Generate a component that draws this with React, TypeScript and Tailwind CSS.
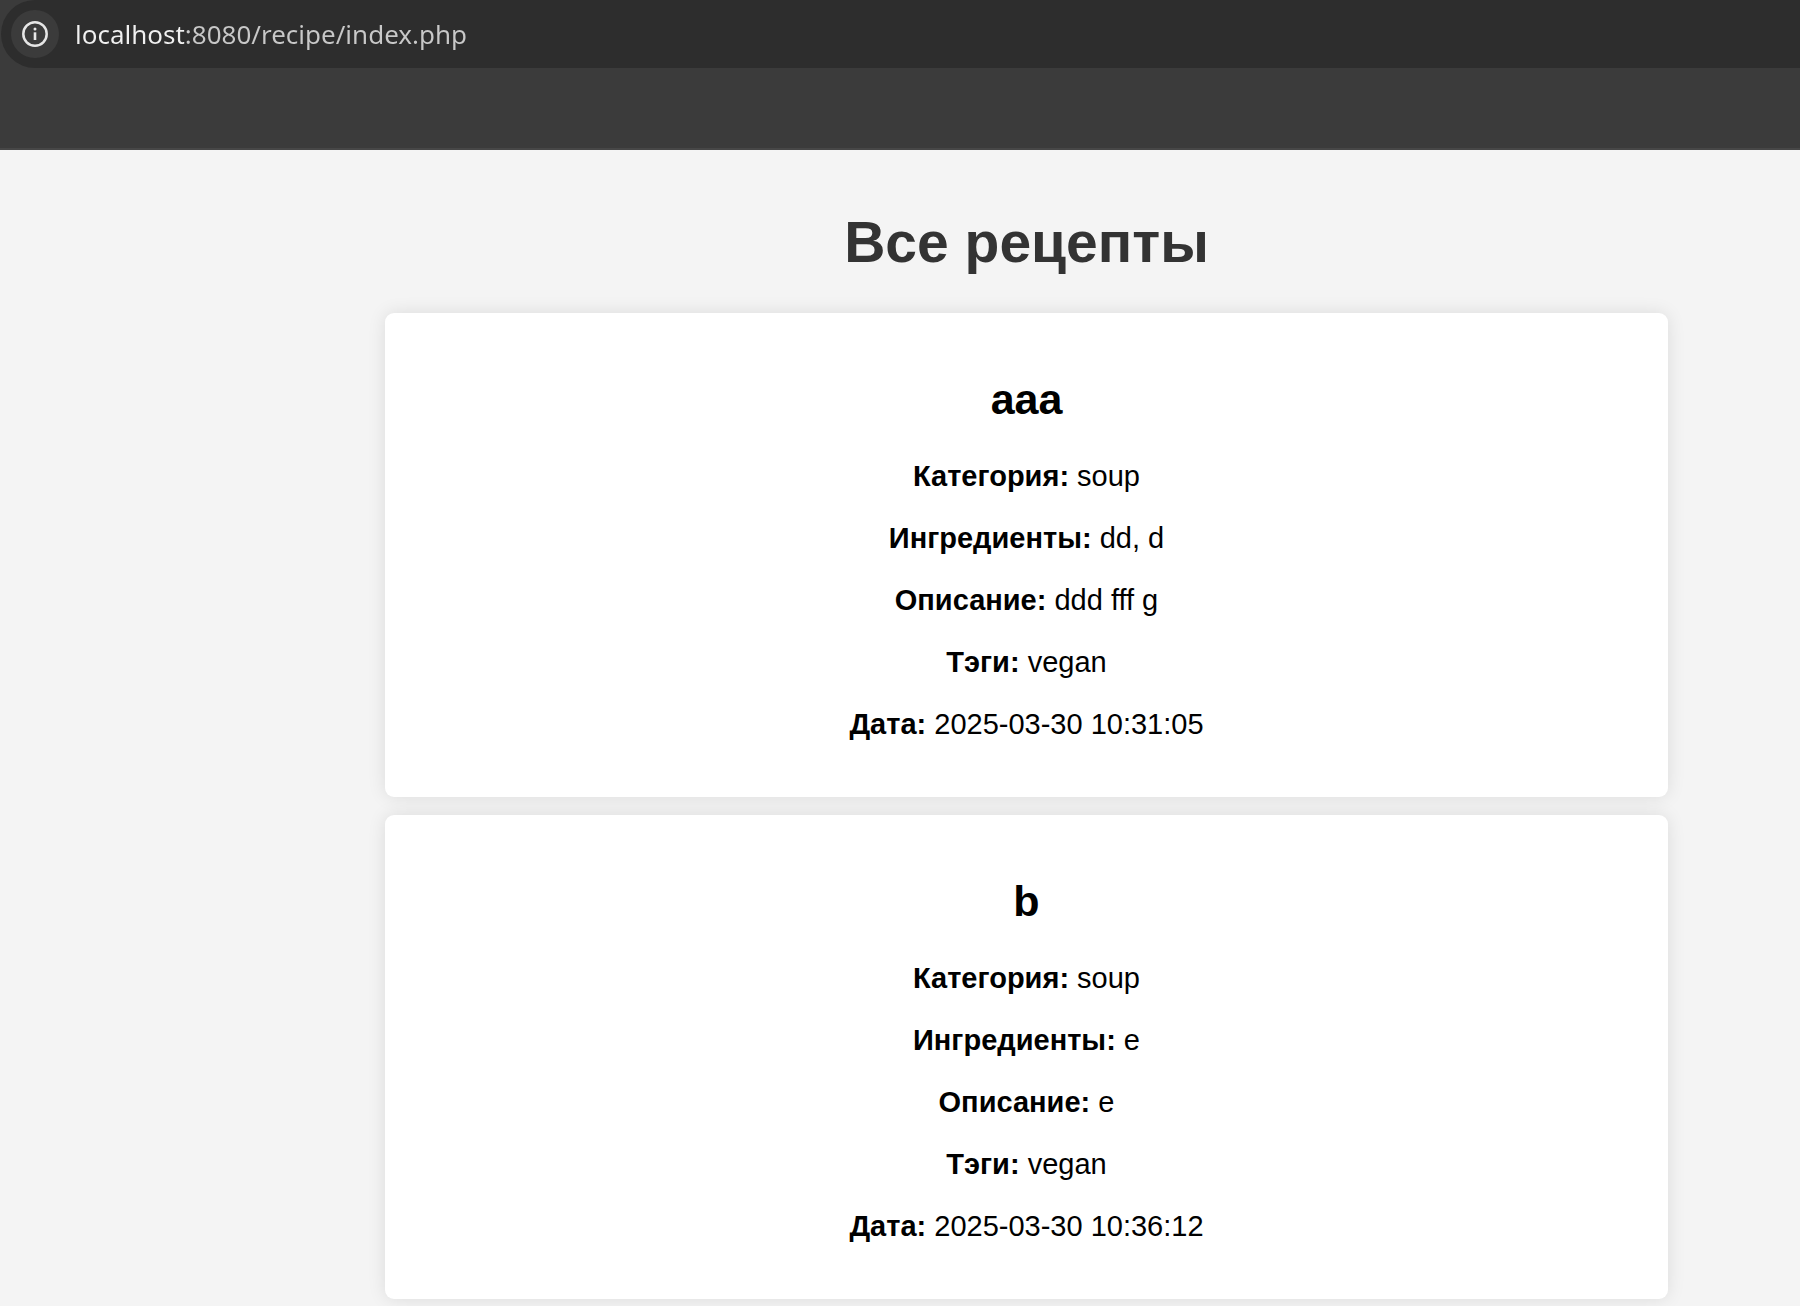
type Recipe = {
  title: string;
  category: string;
  ingredients: string;
  description: string;
  tags: string;
  date: string;
};

const recipes: Recipe[] = [
  {
    title: "aaa",
    category: "soup",
    ingredients: "dd, d",
    description: "ddd fff g",
    tags: "vegan",
    date: "2025-03-30 10:31:05",
  },
  {
    title: "b",
    category: "soup",
    ingredients: "e",
    description: "e",
    tags: "vegan",
    date: "2025-03-30 10:36:12",
  },
];

function AddressBar() {
  return (
    <header className="h-[150px] border-b-2 border-[#474747] bg-[#3b3b3b] pl-px">
      <div className="flex h-[68px] items-center rounded-l-full bg-[#2d2d2d] pl-2.5">
        <button
          type="button"
          aria-label="Site information"
          className="flex size-12 shrink-0 items-center justify-center rounded-full bg-[#3b3b3b] text-[#e6e6e6]"
        >
          <svg viewBox="0 0 26 26" className="size-[26px]" fill="none" aria-hidden="true">
            <circle cx="13" cy="13" r="11.7" stroke="currentColor" strokeWidth="2.5" />
            <circle cx="13" cy="7.9" r="1.5" fill="currentColor" />
            <path d="M13 11.3v7.7" stroke="currentColor" strokeWidth="2.6" />
          </svg>
        </button>
        <input
          type="text"
          aria-label="Address"
          defaultValue="localhost:8080/recipe/index.php"
          className="ml-4 h-10 min-w-0 flex-1 bg-[linear-gradient(90deg,#f0f0f0_109px,#c8c8c8_109px)] bg-clip-text font-['Noto_Sans','Open_Sans',sans-serif] text-[26px] text-transparent outline-none"
        />
      </div>
    </header>
  );
}

function Field({ label, value }: { label: string; value: string }) {
  return (
    <p>
      <strong className="font-bold">{label}:</strong> {value}
    </p>
  );
}

function RecipeCard({ recipe }: { recipe: Recipe }) {
  return (
    <article className="flex flex-col gap-[29px] rounded-[9px] bg-white pt-[62px] pb-14 text-[29px] leading-[33px] shadow-[0_0_18px_rgba(0,0,0,0.1)]">
      <h2 className="mb-[7px] text-[43px] leading-[49px] font-bold">{recipe.title}</h2>
      <Field label="Категория" value={recipe.category} />
      <Field label="Ингредиенты" value={recipe.ingredients} />
      <Field label="Описание" value={recipe.description} />
      <Field label="Тэги" value={recipe.tags} />
      <Field label="Дата" value={recipe.date} />
    </article>
  );
}

export default function App() {
  return (
    <div className="min-h-screen bg-[#f4f4f4] font-['Liberation_Sans',Arial,sans-serif] text-black">
      <AddressBar />
      <main className="pt-[60px] pr-[132px] pb-[7px] pl-[385px] text-center">
        <h1 className="mb-[39px] text-[57px] leading-[64px] font-bold text-[#333333]">
          Все рецепты
        </h1>
        <div className="flex flex-col gap-[18px]">
          {recipes.map((recipe) => (
            <RecipeCard key={recipe.title} recipe={recipe} />
          ))}
        </div>
      </main>
    </div>
  );
}
